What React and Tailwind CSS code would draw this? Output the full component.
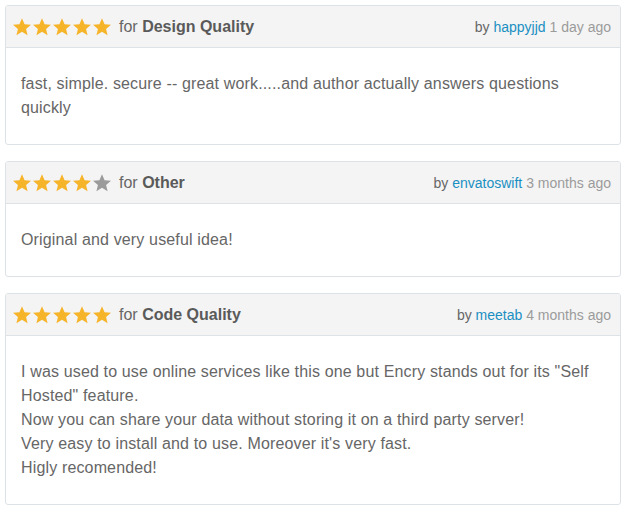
import React from 'react';

const REVIEWS = [
    {
        rating: 5,
        category: 'Design Quality',
        author: 'happyjjd',
        when: '1 day ago',
        lines: ['fast, simple. secure -- great work.....and author actually answers questions quickly'],
    },
    {
        rating: 4,
        category: 'Other',
        author: 'envatoswift',
        when: '3 months ago',
        lines: ['Original and very useful idea!'],
    },
    {
        rating: 5,
        category: 'Code Quality',
        author: 'meetab',
        when: '4 months ago',
        lines: [
            'I was used to use online services like this one but Encry stands out for its "Self Hosted" feature.',
            'Now you can share your data without storing it on a third party server!',
            "Very easy to install and to use. Moreover it's very fast.",
            'Higly recomended!',
        ],
    },
];

const Star = ({ on }) => (
    <svg viewBox="0 0 24 24" className="w-[20px] h-[20px]" fill={on ? '#f6b42a' : '#9b9b9b'}>
        <path d="M12 1.6l3.1 7.1 7.7.6-5.9 5 1.8 7.6L12 17.8l-6.7 4.1 1.8-7.6-5.9-5 7.7-.6z" />
    </svg>
);

function ReviewCard({ r }) {
    return (
        <div className="border border-[#dde2e7] rounded-[3px] bg-white overflow-hidden">
            {/* header */}
            <div className="h-[42px] bg-[#f4f4f4] border-b border-[#dde2e7] flex items-center justify-between pl-[6px] pr-[9px] pt-[1px]">
                <div className="flex items-center">
                    <div className="flex items-center">
                        {[1, 2, 3, 4, 5].map(n => <Star key={n} on={n <= r.rating} />)}
                    </div>
                    <span className="ml-[7px] text-[16px] text-[#666]">
                        for <b className="font-bold text-[#5a5a5a]">{r.category}</b>
                    </span>
                </div>
                <span className="text-[14px] text-[#666]">
                    by <span className="text-[#1a8fc2]">{r.author}</span>{' '}
                    <span className="text-[#9b9b9b]">{r.when}</span>
                </span>
            </div>
            {/* body */}
            <div className="px-[15px] py-[24px] text-[16px] leading-[24px] tracking-[0.15px] text-[#666]">
                {r.lines.map((l, i) => <p key={i} className="m-0">{l}</p>)}
            </div>
        </div>
    );
}

export default function App() {
    return (
        <div className="w-[627px] bg-white pt-[5px] pl-[5px] pr-[6px] flex flex-col gap-[16px]" style={{ fontFamily: '"Liberation Sans", Arial, sans-serif' }}>
            {REVIEWS.map(r => <ReviewCard key={r.author} r={r} />)}
        </div>
    );
}
